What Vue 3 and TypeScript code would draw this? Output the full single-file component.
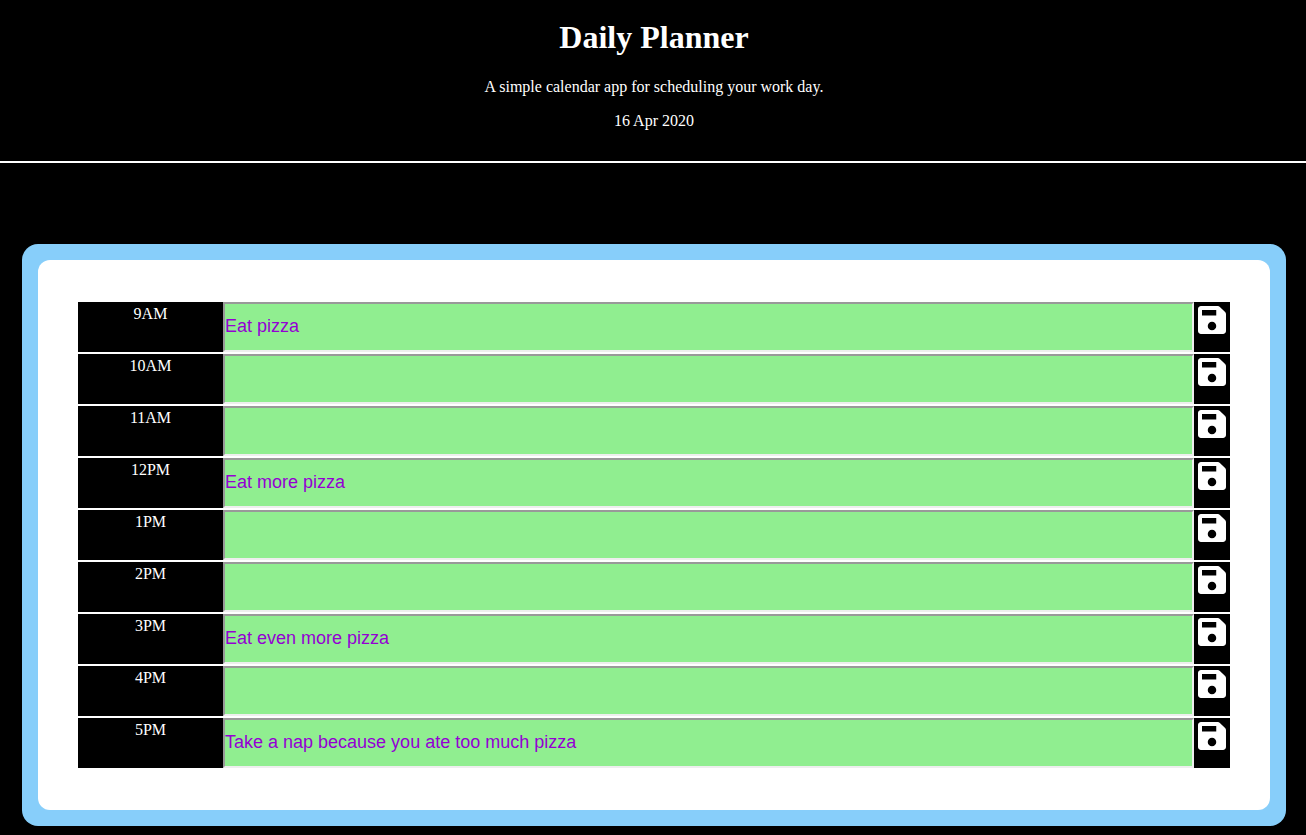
<script setup lang="ts">
import { ref } from "vue";

interface Slot {
  hour: string;
  note: string;
}

const slots = ref<Slot[]>([
  { hour: "9AM", note: "Eat pizza" },
  { hour: "10AM", note: "" },
  { hour: "11AM", note: "" },
  { hour: "12PM", note: "Eat more pizza" },
  { hour: "1PM", note: "" },
  { hour: "2PM", note: "" },
  { hour: "3PM", note: "Eat even more pizza" },
  { hour: "4PM", note: "" },
  { hour: "5PM", note: "Take a nap because you ate too much pizza" },
]);
</script>

<template>
  <div class="page">
    <header class="top">
      <h1>Daily Planner</h1>
      <p>A simple calendar app for scheduling your work day.</p>
      <p>16 Apr 2020</p>
    </header>

    <main class="outer">
      <div class="inner">
        <div class="rows">
          <div v-for="slot in slots" :key="slot.hour" class="row">
            <div class="hour">{{ slot.hour }}</div>
            <input v-model="slot.note" class="note" type="text" />
            <button class="save" type="button" aria-label="Save">
              <svg viewBox="0 0 448 512" width="28" height="32">
                <path
                  fill="currentColor"
                  fill-rule="evenodd"
                  d="M433.941 129.941l-83.882-83.882A48 48 0 0 0 316.118 32H48C21.49 32 0 53.49 0 80v352c0 26.51 21.49 48 48 48h352c26.51 0 48-21.49 48-48V163.882a48 48 0 0 0-14.059-33.941zM224 284a68 68 0 1 0 0 136a68 68 0 1 0 0-136zM64 96H292V182H64z"
                />
              </svg>
            </button>
          </div>
        </div>
      </div>
    </main>
  </div>
</template>

<style>
body {
  background: #000;
}
</style>

<style scoped>
.page {
  font-family: "Liberation Serif", serif;
  font-size: 16px;
  color: #fff;
  background: #000;
  height: 835px;
  overflow: hidden;
}

.top {
  text-align: center;
  border-bottom: 2px solid #fff;
  padding: 19px 0 15px 2px;
}

.top h1 {
  font-size: 32px;
  margin: 0 0 22px;
}

.top p {
  margin: 16px 0;
}

.outer {
  margin: 81px 20px 0 22px;
  padding: 16px;
  border-radius: 16px;
  background: #87cefa;
}

.inner {
  padding: 42px 40px;
  border-radius: 12px;
  background: #fff;
}

.rows {
  display: flex;
  flex-direction: column;
  gap: 2px;
}

.row {
  display: flex;
  height: 50px;
}

.hour {
  width: 145px;
  flex: none;
  padding-top: 3px;
  text-align: center;
  background: #000;
}

.note {
  flex: 1;
  min-width: 0;
  box-sizing: border-box;
  height: 50px;
  margin: 0;
  padding: 0 0 2px;
  border: 2px solid;
  border-color: #999 #eee #eee #999;
  border-radius: 0;
  outline: none;
  background: #90ee90;
  color: #9400d3;
  font-family: "Liberation Sans", Arial, sans-serif;
  font-size: 18px;
}

.save {
  width: 36px;
  flex: none;
  display: flex;
  justify-content: center;
  align-items: flex-start;
  padding: 2px 0 0;
  border: 0;
  background: #000;
  color: #fff;
}

.save svg {
  display: block;
}
</style>
